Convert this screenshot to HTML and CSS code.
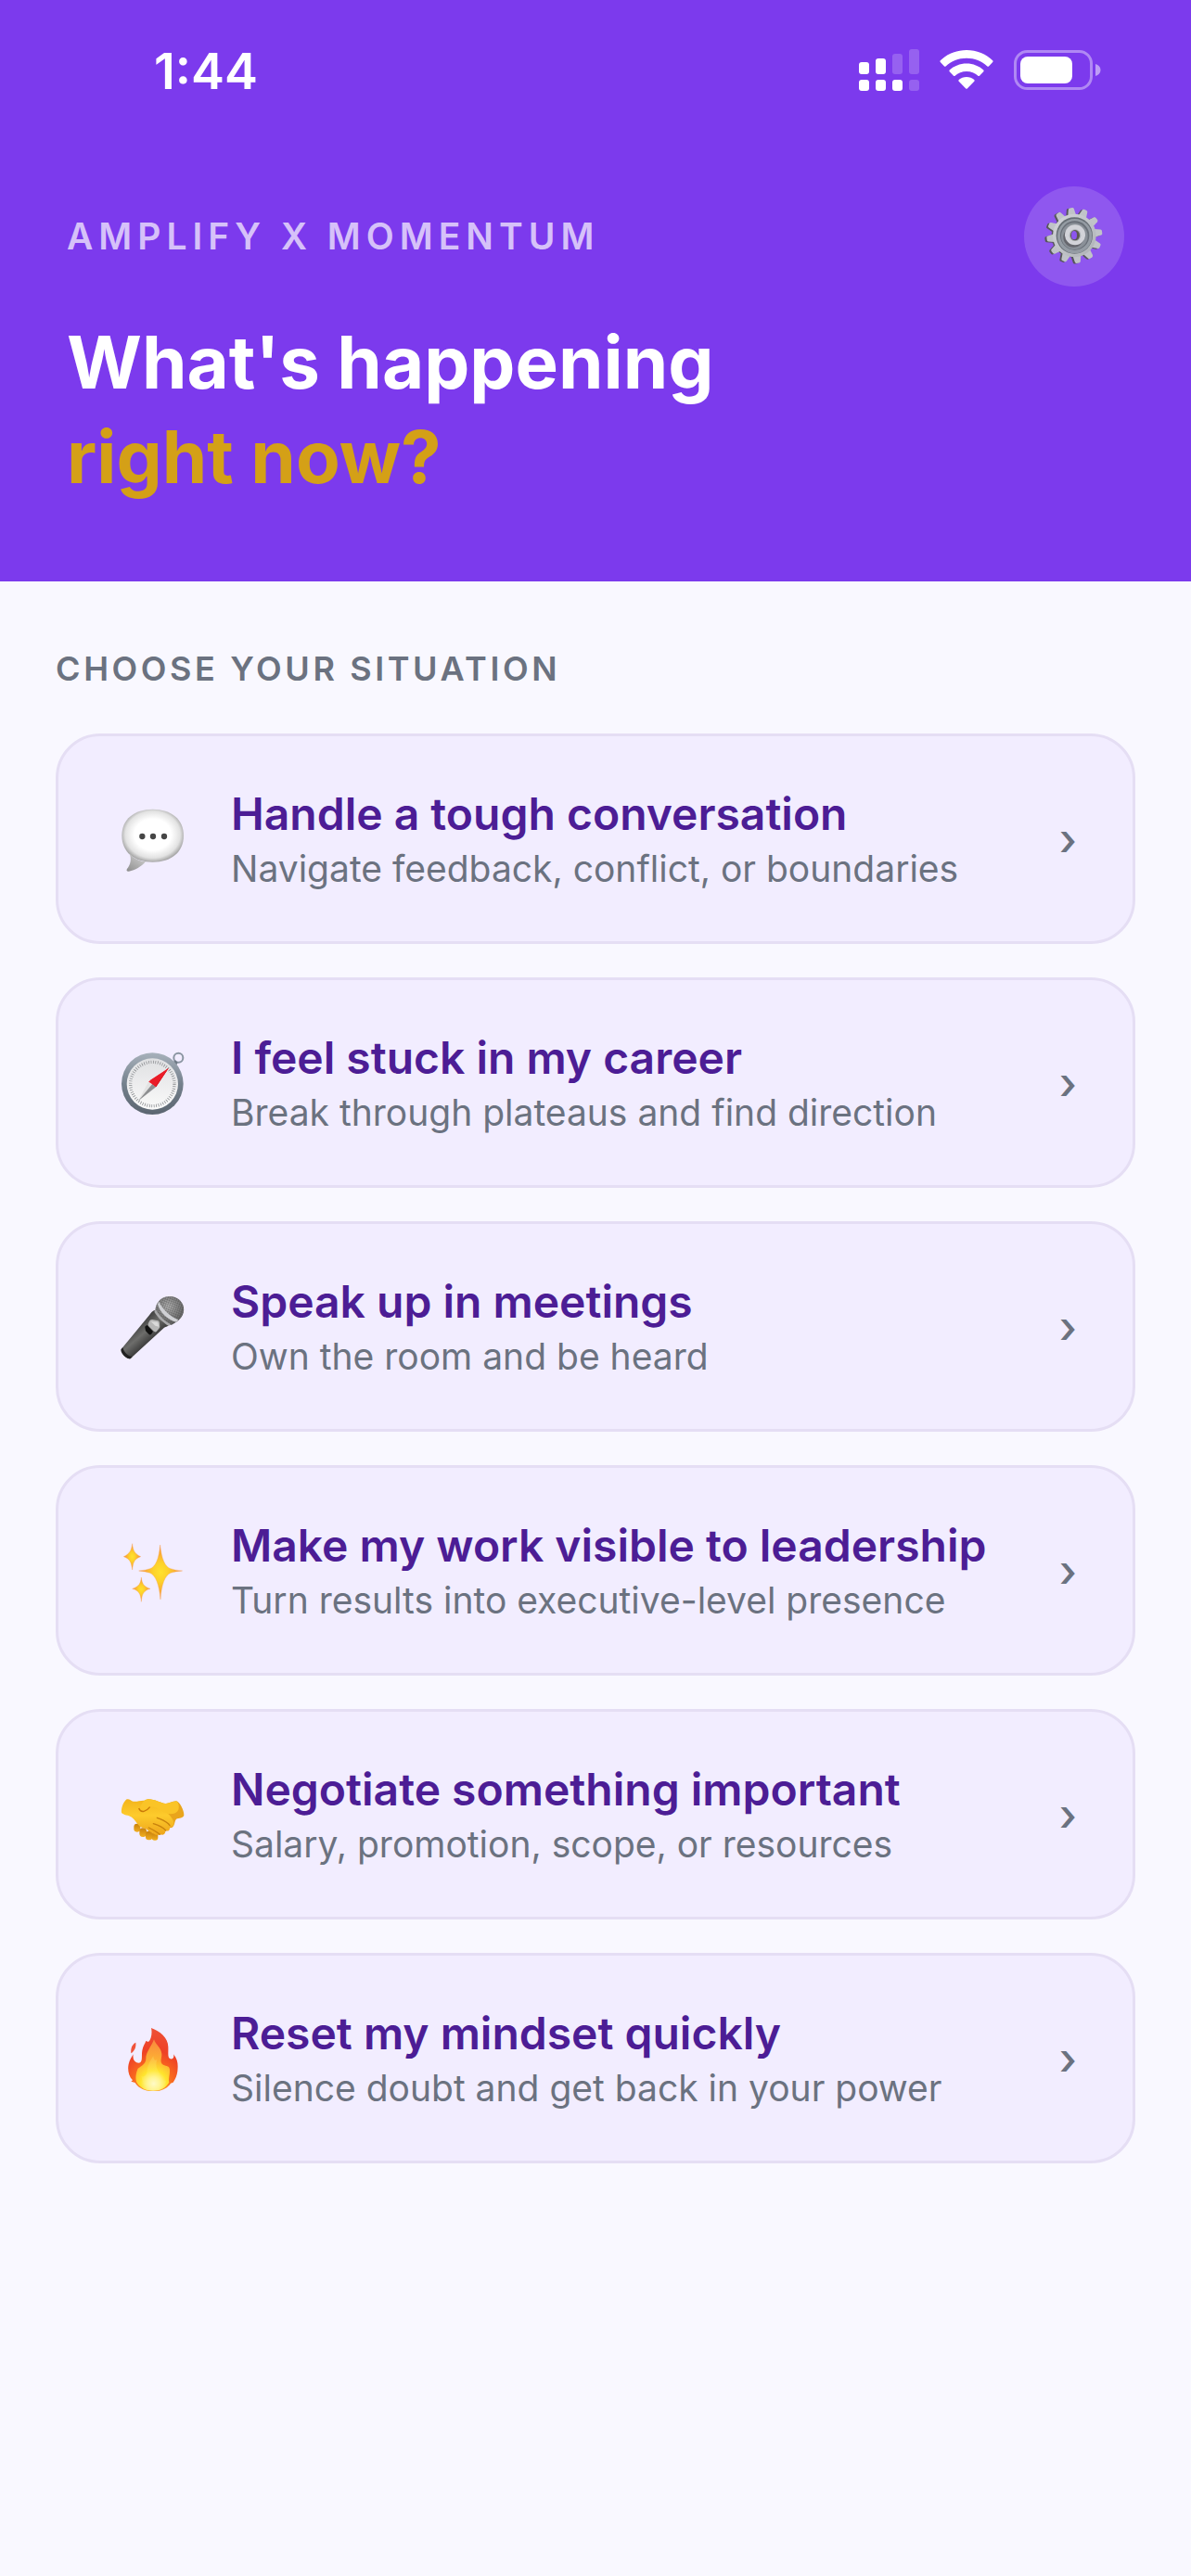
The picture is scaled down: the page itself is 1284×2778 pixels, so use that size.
FILE: index.html
```html
<!DOCTYPE html>
<html lang="en">
<head>
    <meta charset="UTF-8">
    <meta name="viewport" content="width=device-width, initial-scale=1.0">
    <title>Amplify x Momentum</title>
    <link rel="stylesheet" href="styles.css">
</head>
<body>

    <header class="header">
        <!-- Status bar -->
        <div class="status-bar">
            <span class="time">1:44</span>
            <div class="status-icons">
                <svg width="65" height="46" viewBox="0 0 65 46" fill="#fff">
                    <rect x="0" y="15" width="11" height="13" rx="3"/>
                    <rect x="18" y="11" width="11" height="17" rx="3"/>
                    <rect x="36" y="6" width="11" height="22" rx="3" opacity="0.2"/>
                    <rect x="54" y="1" width="11" height="27" rx="3" opacity="0.2"/>
                    <rect x="0" y="34" width="11" height="12" rx="3"/>
                    <rect x="18" y="34" width="11" height="12" rx="3"/>
                    <rect x="36" y="34" width="11" height="12" rx="3"/>
                    <rect x="54" y="34" width="11" height="12" rx="3" opacity="0.2"/>
                </svg>
                <svg width="58" height="46" viewBox="0 0 58 46" fill="#fff">
                    <path d="M29 2C18 2 8 6.300 .8 13.200Q0 14 .8 15L5 19.400Q5.800 20.200 6.600 19.400C12.500 14 20.300 10.800 29 10.800S45.500 14 51.400 19.400Q52.200 20.200 53 19.400L57.200 15Q58 14 57.200 13.200C50 6.300 40 2 29 2Z"/>
                    <path d="M29 16.500C21.900 16.500 15.500 19.200 10.700 23.500Q9.900 24.300 10.700 25.200L15 29.700Q15.800 30.500 16.600 29.700C19.900 26.800 24.200 25 29 25S38.100 26.800 41.400 29.700Q42.200 30.500 43 29.700L47.300 25.200Q48.100 24.300 47.300 23.500C42.500 19.200 36.100 16.500 29 16.500Z"/>
                    <path d="M29 31C25.800 31 23 32.100 20.700 34Q19.900 34.900 20.700 35.800L28 43.300Q29 44.300 30 43.300L37.300 35.800Q38.100 34.900 37.300 34C35 32.100 32.200 31 29 31Z"/>
                </svg>
                <svg width="94" height="46" viewBox="0 0 94 46" fill="#fff">
                    <rect x="1.500" y="3.500" width="82" height="40" rx="13" fill="none" stroke="#fff" stroke-width="3" opacity="0.4"/>
                    <rect x="7" y="9" width="56" height="29" rx="8"/>
                    <path d="M88 17C91.500 18 93.500 20.500 93.500 23.500S91.500 29 88 30Z" opacity="0.5"/>
                </svg>
            </div>
        </div>

        <div class="header-row">
            <p class="brand">AMPLIFY X MOMENTUM</p>
            <button class="settings" aria-label="Settings">
                <svg width="68" height="68" viewBox="720 603 204 204">
                    <defs>
                        <linearGradient id="gearFill" x1="0" y1="0" x2="1" y2="1">
                            <stop offset="0" stop-color="#d4d6db"/>
                            <stop offset="1" stop-color="#adb1b5"/>
                        </linearGradient>
                        <g id="teeth">
                            <path id="tooth" d="M806 646L812 616Q813 612 817 612H825Q829 612 830 616L836 646Z"/>
                            <use href="#tooth" transform="rotate(30 821 702)"/>
                            <use href="#tooth" transform="rotate(60 821 702)"/>
                            <use href="#tooth" transform="rotate(90 821 702)"/>
                            <use href="#tooth" transform="rotate(120 821 702)"/>
                            <use href="#tooth" transform="rotate(150 821 702)"/>
                            <use href="#tooth" transform="rotate(180 821 702)"/>
                            <use href="#tooth" transform="rotate(210 821 702)"/>
                            <use href="#tooth" transform="rotate(240 821 702)"/>
                            <use href="#tooth" transform="rotate(270 821 702)"/>
                            <use href="#tooth" transform="rotate(300 821 702)"/>
                            <use href="#tooth" transform="rotate(330 821 702)"/>
                        </g>
                    </defs>
                    <g transform="translate(-4 2) rotate(-7 821 702)" fill="#56565a">
                        <use href="#teeth"/>
                        <circle cx="821" cy="702" r="62" fill="none" stroke="#56565a" stroke-width="12"/>
                    </g>
                    <g transform="translate(2 0) rotate(-7 821 702)" fill="#c0c3c8">
                        <use href="#teeth"/>
                    </g>
                    <circle cx="823" cy="702" r="70" fill="url(#gearFill)"/>
                    <circle cx="823" cy="702" r="59" fill="#666d74"/>
                    <circle cx="824" cy="704" r="56" fill="#959ca4"/>
                    <circle cx="824" cy="702" r="47" fill="#696f78"/>
                    <circle cx="823" cy="704" r="43" fill="#8a9098"/>
                    <circle cx="820" cy="707" r="33" fill="#66676e"/>
                    <circle cx="825" cy="700" r="33" fill="#d2d3d9"/>
                    <circle cx="825" cy="701" r="19" fill="#aaaeb4"/>
                    <ellipse cx="825" cy="701" rx="15" ry="17" fill="#5c5750"/>
                    <ellipse cx="822" cy="701" rx="9" ry="14" fill="#8c55ee"/>
                </svg>
            </button>
        </div>

        <h1 class="title">What's happening<br><span class="title-accent">right now?</span></h1>
    </header>

    <main class="content">
        <h2 class="section-label">CHOOSE YOUR SITUATION</h2>

        <div class="card-list">
            <button class="card">
                <span class="card-icon">
                    <svg width="70" height="70" viewBox="60 58 210 210">
                        <defs>
                            <radialGradient id="bubbleFill" cx="0.5" cy="0.48" r="0.54">
                                <stop offset="0.55" stop-color="#fff"/>
                                <stop offset="0.82" stop-color="#e2e2e2"/>
                                <stop offset="1" stop-color="#999"/>
                            </radialGradient>
                            <linearGradient id="tailFill" x1="0" y1="1" x2="0.7" y2="0">
                                <stop offset="0" stop-color="#8d8d8d"/>
                                <stop offset="1" stop-color="#cfcfcf"/>
                            </linearGradient>
                        </defs>
                        <path d="M164 66C104 66 64 99 64 151C64 205 104 237 164 237C224 237 264 205 264 151C264 99 224 66 164 66Z" fill="url(#bubbleFill)"/>
                        <path d="M88 208C97 226 92 245 81 259C78 264 80 268 87 267C108 264 126 252 141 236C122 234 102 226 88 208Z" fill="url(#tailFill)"/>
                        <g fill="#464646">
                            <circle cx="130" cy="154" r="9.500"/>
                            <circle cx="165" cy="154" r="9.500"/>
                            <circle cx="201" cy="154" r="9.500"/>
                        </g>
                    </svg>
                </span>
                <span class="card-text">
                    <span class="card-title">Handle a tough conversation</span>
                    <span class="card-sub">Navigate feedback, conflict, or boundaries</span>
                </span>
                <span class="chevron">›</span>
            </button>

            <button class="card">
                <span class="card-icon">
                    <svg width="70" height="70" viewBox="60 67 210 210">
                        <defs>
                            <linearGradient id="rimFill" x1="0" y1="0" x2="0" y2="1">
                                <stop offset="0" stop-color="#a7b1bb"/>
                                <stop offset="0.5" stop-color="#75818d"/>
                                <stop offset="1" stop-color="#5b6570"/>
                            </linearGradient>
                            <linearGradient id="dialFill" x1="0" y1="0" x2="0" y2="1">
                                <stop offset="0" stop-color="#dfe0e2"/>
                                <stop offset="1" stop-color="#fafafa"/>
                            </linearGradient>
                        </defs>
                        <circle cx="247" cy="90" r="15" fill="none" stroke="#8a95a1" stroke-width="6"/>
                        <path d="M226 106L238 98L245 106L238 119Z" fill="#6f7a86"/>
                        <circle cx="163" cy="174" r="100" fill="url(#rimFill)"/>
                        <circle cx="163" cy="175" r="83" fill="url(#dialFill)"/>
                        <circle cx="163" cy="175" r="71" fill="none" stroke="#85888b" stroke-width="10" stroke-dasharray="2.200 5.235"/>
                        <path d="M215 124L150 168L175 184Z" fill="#f0202b"/>
                        <path d="M215 124L162 176L175 184Z" fill="#c90f1b"/>
                        <path d="M117 230L150 168L162 176Z" fill="#e2e2e2"/>
                        <path d="M117 230L162 176L175 184Z" fill="#8d8f91"/>
                        <path d="M215 124L154 164L164 176L173 184Z" fill="#ea1c27"/>
                    </svg>
                </span>
                <span class="card-text">
                    <span class="card-title">I feel stuck in my career</span>
                    <span class="card-sub">Break through plateaus and find direction</span>
                </span>
                <span class="chevron">›</span>
            </button>

            <button class="card">
                <span class="card-icon">
                    <svg width="70" height="70" viewBox="60 61 210 210">
                        <defs>
                            <linearGradient id="micBody" x1="0.3" y1="0.3" x2="0.65" y2="0.7">
                                <stop offset="0" stop-color="#3c3c3c"/>
                                <stop offset="0.45" stop-color="#6d6d6b"/>
                                <stop offset="1" stop-color="#2b2b2b"/>
                            </linearGradient>
                            <radialGradient id="micHead" cx="0.45" cy="0.35" r="0.65">
                                <stop offset="0" stop-color="#b4b4b4"/>
                                <stop offset="1" stop-color="#5e5e5e"/>
                            </radialGradient>
                            <pattern id="mesh" width="7" height="7" patternUnits="userSpaceOnUse" patternTransform="rotate(20)">
                                <path d="M0 0H7M0 0V7" stroke="#3f3f3f" stroke-width="2.500"/>
                            </pattern>
                        </defs>
                        <path d="M172 112L218 158C214 164 207 166 201 168L93 267C84 275 58 250 62 238L153 128C158 120 164 113 172 112Z" fill="url(#micBody)"/>
                        <path d="M62 238C58 250 84 275 93 267L98 262C86 262 70 248 67 232Z" fill="#222"/>
                        <path d="M186 80C204 62 236 64 252 80C270 98 268 126 250 142C241 151 232 156 222 160C206 150 180 126 172 112C173 100 178 88 186 80Z" fill="url(#micHead)"/>
                        <path d="M186 80C204 62 236 64 252 80C270 98 268 126 250 142C241 151 232 156 222 160C206 150 180 126 172 112C173 100 178 88 186 80Z" fill="url(#mesh)" opacity="0.6"/>
                        <path d="M184 84C195 108 220 132 247 143L240 150C215 144 188 120 180 93Z" fill="#cfd0d4"/>
                        <path d="M174 110C184 130 204 148 222 157L216 163C198 152 180 136 169 117Z" fill="#a9a9ab"/>
                        <path d="M139 168Q138 164 142 162L146 160L165 181L159 190Q155 193 151 189L141 179Z" fill="#111"/>
                        <path d="M154 146Q157 142 163 142L181 146Q186 148 186 153L187 165Q187 168 184 171L176 181Q171 184 166 179L150 162Q148 158 150 154Z" fill="#b7b7b7"/>
                        <path d="M158 148L180 150L184 165L172 162Z" fill="#dadada"/>
                    </svg>
                </span>
                <span class="card-text">
                    <span class="card-title">Speak up in meetings</span>
                    <span class="card-sub">Own the room and be heard</span>
                </span>
                <span class="chevron">›</span>
            </button>

            <button class="card">
                <span class="card-icon">
                    <svg width="70" height="70" viewBox="60 55 210 210">
                        <defs>
                            <radialGradient id="starFill">
                                <stop offset="0" stop-color="#ffe22e"/>
                                <stop offset="0.35" stop-color="#fdd12b"/>
                                <stop offset="1" stop-color="#f8893c"/>
                            </radialGradient>
                        </defs>
                        <g fill="url(#starFill)" stroke="#f5a04e" stroke-width="1" stroke-linejoin="round">
                            <path d="M188 76C192 120 204 148 222 153Q236 158 260 160Q236 162 222 167C204 174 192 204 189 253C185 204 173 174 155 167Q141 162 119 160Q141 158 155 153C173 148 184 120 188 76Z"/>
                            <path d="M98 72C100 92 104 104 125 114C104 121 100 134 98 157C95 134 91 121 70 114C91 104 95 92 98 72Z"/>
                            <path d="M127 181C129 200 134 211 156 218C134 224 129 236 127 260C125 236 120 224 98 218C120 211 125 200 127 181Z"/>
                        </g>
                    </svg>
                </span>
                <span class="card-text">
                    <span class="card-title">Make my work visible to leadership</span>
                    <span class="card-sub">Turn results into executive-level presence</span>
                </span>
                <span class="chevron">›</span>
            </button>

            <button class="card">
                <span class="card-icon">
                    <svg width="70" height="70" viewBox="60 64 210 210">
                        <defs>
                            <linearGradient id="handFill" x1="0" y1="0" x2="0" y2="1">
                                <stop offset="0" stop-color="#f3b41c"/>
                                <stop offset="0.45" stop-color="#fdcb2c"/>
                                <stop offset="1" stop-color="#eea51b"/>
                            </linearGradient>
                            <linearGradient id="fingerFill" x1="0" y1="0" x2="0" y2="1">
                                <stop offset="0" stop-color="#c77f0c"/>
                                <stop offset="1" stop-color="#f2b021"/>
                            </linearGradient>
                        </defs>
                        <!-- finger tips -->
                        <g fill="url(#fingerFill)">
                            <rect x="103" y="198" width="21" height="27" rx="10"/>
                            <rect x="121" y="212" width="23" height="29" rx="11"/>
                            <rect x="141" y="222" width="22" height="29" rx="10"/>
                            <rect x="161" y="226" width="20" height="26" rx="9"/>
                        </g>
                        <!-- right hand -->
                        <path d="M146 119C165 116 190 131 205 133C215 134 224 126 240 125C250 125 266 155 265 171C262 181 249 178 240 183C234 190 236 204 226 211C210 214 170 200 140 160Z" fill="#e9a51c"/>
                        <!-- left hand -->
                        <path d="M78 120C86 115 94 124 101 126C111 128 122 123 133 123C151 121 180 144 202 157C218 166 237 190 231 202C228 209 222 207 219 207C221 219 214 224 205 221C206 232 197 237 188 233C176 240 165 228 151 222C142 211 128 213 121 206C112 197 107 185 96 177C86 170 68 170 63 162C61 148 69 128 78 120Z" fill="url(#handFill)"/>
                        <path d="M121 149C131 163 146 153 154 143C170 140 195 158 213 166C229 168 242 164 247 153C251 142 246 127 240 125C224 127 215 134 205 133C190 131 165 116 146 119C132 121 128 137 121 149Z" fill="#fac427"/>
                        <path d="M119 148C126 166 144 158 155 144" fill="none" stroke="#c87908" stroke-width="4"/>
                        <g fill="none" stroke="#c8820d" stroke-width="4" stroke-linecap="round">
                            <path d="M178 179C194 186 211 191 219 204"/>
                            <path d="M166 198C182 203 197 210 206 220"/>
                            <path d="M151 211C165 218 178 225 187 233"/>
                        </g>
                    </svg>
                </span>
                <span class="card-text">
                    <span class="card-title">Negotiate something important</span>
                    <span class="card-sub">Salary, promotion, scope, or resources</span>
                </span>
                <span class="chevron">›</span>
            </button>

            <button class="card">
                <span class="card-icon">
                    <svg width="70" height="70" viewBox="60 58 210 210">
                        <defs>
                            <radialGradient id="flameOuter" gradientUnits="userSpaceOnUse" cx="165" cy="245" r="180">
                                <stop offset="0" stop-color="#ffc928"/>
                                <stop offset="0.35" stop-color="#f9691e"/>
                                <stop offset="0.6" stop-color="#ee4125"/>
                                <stop offset="1" stop-color="#ee5137"/>
                            </radialGradient>
                            <radialGradient id="flameInner" gradientUnits="userSpaceOnUse" cx="167" cy="244" r="140">
                                <stop offset="0" stop-color="#fffde0"/>
                                <stop offset="0.15" stop-color="#fff59a"/>
                                <stop offset="0.3" stop-color="#ffe52d"/>
                                <stop offset="0.55" stop-color="#fdb133"/>
                                <stop offset="1" stop-color="#f9893e"/>
                            </radialGradient>
                        </defs>
                        <path d="M109 111C97 117 92 130 94 146C104 139 111 127 109 111Z" fill="#f05339"/>
                        <path d="M159 64C187 74 214 96 214 125C215 144 211 160 221 164C230 166 234 158 231 149C246 166 246 184 244 204C242 218 238 228 230 240L222 243C211 260 190 269 165 269C139 269 117 258 107 241L94 237L99 233C86 221 82 199 86 181C89 167 96 158 101 149C98 166 107 177 119 177C133 176 127 154 130 137C132 122 140 113 142 106L150 109C159 101 163 80 159 64Z" fill="url(#flameOuter)"/>
                        <path d="M168 101C173 118 192 128 193 148C194 158 187 171 194 180C204 190 217 182 219 198C220 215 214 227 217 240C206 258 190 267 165 267C142 267 122 257 112 240C107 226 110 208 116 195C125 188 140 182 142 165C141 142 160 124 168 101Z" fill="url(#flameInner)"/>
                        <path d="M166 155C156 170 147 184 146 202C145 216 137 225 127 220C131 242 144 264 167 265C190 264 204 251 207 234C196 236 189 225 187 213C184 202 169 194 178 166Q168 174 166 155Z" fill="#fff27a" opacity="0.25"/>
                    </svg>
                </span>
                <span class="card-text">
                    <span class="card-title">Reset my mindset quickly</span>
                    <span class="card-sub">Silence doubt and get back in your power</span>
                </span>
                <span class="chevron">›</span>
            </button>
        </div>
    </main>

</body>
</html>
```
FILE: styles.css
```css
* {
    box-sizing: border-box;
}

body {
    font-family: Inter, "Liberation Sans", sans-serif;
    background-color: #f9f8ff;
    margin: 0;
    min-height: 100vh;
}

button {
    font-family: inherit;
    border: none;
    margin: 0;
    cursor: pointer;
}

svg {
    display: block;
}

/* Header */
.header {
    background-color: #7c3aed;
    padding-bottom: 83px;
}

.status-bar {
    display: flex;
    justify-content: space-between;
    align-items: flex-start;
    padding: 52px 97px 39px 166px;
}

.time {
    font-size: 54px;
    line-height: 50px;
    font-weight: 600;
    color: #fff;
}

.status-icons {
    display: flex;
    gap: 22px;
}

.header-row {
    display: flex;
    justify-content: space-between;
    align-items: center;
    padding: 60px 72px 0;
}

.brand {
    margin: 0;
    font-size: 39px;
    line-height: 48px;
    font-weight: 600;
    letter-spacing: 6px;
    color: rgba(255, 255, 255, 0.7);
}

.settings {
    width: 108px;
    height: 108px;
    padding: 0;
    display: flex;
    justify-content: center;
    align-items: center;
    border-radius: 50%;
    background-color: rgba(255, 255, 255, 0.15);
}

.title {
    margin: 31px 72px 0;
    font-size: 78px;
    line-height: 102px;
    font-weight: 700;
    color: #fff;
}

.title-accent {
    color: #d4a017;
}

/* Situation list */
.content {
    padding: 72px 60px;
}

.section-label {
    margin: 0 0 48px;
    font-size: 36px;
    line-height: 44px;
    font-weight: 600;
    letter-spacing: 0.1em;
    color: #6b7280;
}

.card-list {
    display: flex;
    flex-direction: column;
    gap: 36px;
}

.card {
    display: flex;
    align-items: center;
    gap: 42px;
    padding: 55px 60px;
    background-color: #f2edff;
    border: 3px solid #e5def4;
    border-radius: 48px;
    text-align: left;
}

.card-icon {
    width: 84px;
    display: flex;
    justify-content: center;
}

.card-text {
    flex: 1;
    display: flex;
    flex-direction: column;
    gap: 6px;
}

.card-title {
    font-size: 48px;
    line-height: 58px;
    font-weight: 600;
    color: #4c1d95;
}

.card-sub {
    font-size: 39px;
    line-height: 47px;
    color: #6b7280;
}

.chevron {
    font-size: 48px;
    line-height: 60px;
    font-weight: 500;
    color: #6b7280;
}
```
